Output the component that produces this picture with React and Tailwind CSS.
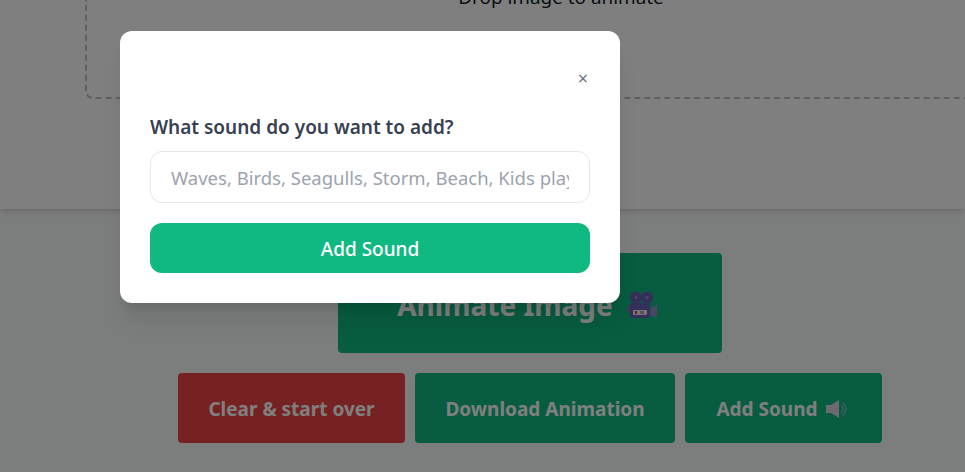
import { useState } from 'react';

function CameraIcon() {
  return (
    <svg width="30" height="28" viewBox="0 0 30 28">
      <circle cx="9" cy="6.5" r="6" fill="#6a60b4" />
      <circle cx="20" cy="6.5" r="6" fill="#6a60b4" />
      <circle cx="9" cy="6.5" r="1.5" fill="#9890d0" />
      <circle cx="20" cy="6.5" r="1.5" fill="#9890d0" />
      <rect x="3" y="12" width="20" height="15" rx="2" fill="#6a60b4" />
      <rect x="0" y="15" width="3" height="6" fill="#7e74b8" />
      <path d="M23 18l7-5v14l-7-3z" fill="#8f8fc4" />
      <rect x="6" y="19" width="14" height="5" rx="1" fill="#eeeaf0" />
      <rect x="8" y="20" width="2" height="3" fill="#e0303a" />
      <rect x="13" y="20" width="4" height="3" fill="#aaa8b4" />
    </svg>
  );
}

function SpeakerIcon() {
  return (
    <svg width="21" height="18" viewBox="0 0 21 18">
      <path d="M0 5h5l8-5v18l-8-5H0z" fill="#d8d4e0" />
      <path d="M15 5a5 5 0 010 8" fill="none" stroke="#7ebfdf" strokeWidth="1.3" />
      <path d="M16.5 2.5a8 8 0 010 13" fill="none" stroke="#7ebfdf" strokeWidth="1.3" />
    </svg>
  );
}

export default function App() {
  const [sound, setSound] = useState('');

  return (
    <div className="relative h-[472px] w-[965px] overflow-hidden bg-[#f9fafb] font-['Noto_Sans',sans-serif]">
      <div className="flex h-[209px] bg-white pl-[44px] shadow-md">
        <div className="h-[168px] w-[2px] bg-[#ebebeb]" />
        <div className="ml-[41px] flex h-[99px] w-[950px] shrink-0 justify-center rounded-b-lg border-2 border-t-0 border-dashed border-[#c0c0c0] pl-[2px]">
          <p className="-mt-[17px] text-[18.9px] text-gray-900">Drop image to animate</p>
        </div>
      </div>

      <div className="mt-[44px] flex flex-col items-center pl-[95px]">
        <button className="flex h-[100px] w-[384px] items-center justify-center gap-[14px] rounded bg-[#10b981] pr-[6px] pt-[3px] text-[28px] font-bold text-white">
          Animate Image <CameraIcon />
        </button>
        <div className="-ml-[95px] mt-[20px] flex gap-[10px] pl-[95px]">
          <button className="h-[70px] w-[227px] rounded bg-[#ef4444] pt-[2px] text-[19px] font-bold text-white">Clear &amp; start over</button>
          <button className="h-[70px] w-[260px] rounded bg-[#10b981] pt-[2px] text-[19px] font-bold text-white">Download Animation</button>
          <button className="flex h-[70px] w-[197px] items-center justify-center gap-2 rounded bg-[#10b981] pr-1 pt-[2px] text-[19px] font-bold text-white">
            Add Sound <SpeakerIcon />
          </button>
        </div>
      </div>

      <div className="absolute inset-0 bg-black/50" />

      <div className="absolute left-[120px] top-[31px] w-[500px] rounded-xl bg-white px-[30px] pb-[30px] pt-[35px] shadow-xl">
        <div className="flex justify-end pr-[2px]">
          <button className="text-lg leading-[24px] text-gray-500">×</button>
        </div>
        <label className="mt-[25px] block text-[19px] font-semibold leading-[24px] text-[#374151]">What sound do you want to add?</label>
        <input
          value={sound}
          onChange={(e) => setSound(e.target.value)}
          placeholder="Waves, Birds, Seagulls, Storm, Beach, Kids playing"
          className="mt-[12px] h-[52px] w-full rounded-xl border border-[#e5e7eb] px-5 text-[18.5px] text-[#374151] outline-none placeholder:text-[#9ca3af]"
        />
        <button className="mt-[20px] h-[50px] w-full rounded-xl bg-[#10b981] pt-[2px] text-[19px] font-medium text-white">Add Sound</button>
      </div>
    </div>
  );
}
